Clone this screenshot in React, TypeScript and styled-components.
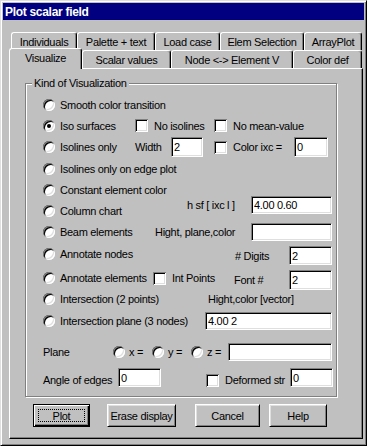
import React from 'react'
import styled, { createGlobalStyle } from 'styled-components'

const FONT = `"Liberation Sans", Arial, sans-serif`

const GlobalStyle = createGlobalStyle`
  html, body {
    margin: 0;
    padding: 0;
  }
  body {
    background: #c0c0c0;
  }
`

const Window = styled.div`
  width: 367px;
  height: 446px;
  box-sizing: border-box;
  padding: 2px;
  background: #c0c0c0;
  border: 1px solid;
  border-color: #dfdfdf #000 #000 #dfdfdf;
  box-shadow: inset 1px 1px 0 #fff, inset -1px -1px 0 #808080;
  display: flex;
  flex-direction: column;
  font-family: ${FONT};
  font-size: 11px;
  letter-spacing: -0.3px;
  color: #000;
`

const TitleBar = styled.div`
  flex: none;
  height: 17px;
  padding-left: 2px;
  background: #000080;
  color: #fff;
  font-weight: bold;
  font-size: 12px;
  display: flex;
  align-items: center;
`

const Body = styled.div`
  flex: 1;
  padding: 12px 1px 4px 6px;
  display: flex;
  flex-direction: column;
`

const TabRow = styled.div<{ $inset?: number }>`
  display: flex;
  align-items: flex-start;
  height: 18px;
  margin-left: ${p => p.$inset ?? 0}px;
`

const Tab = styled.div<{ $w: number; $active?: boolean }>`
  flex: none;
  width: ${p => p.$w}px;
  height: ${p => (p.$active ? 21 : 18)}px;
  margin-top: ${p => (p.$active ? -2 : 0)}px;
  padding-bottom: ${p => (p.$active ? 3 : 0)}px;
  box-sizing: border-box;
  border: 1px solid;
  border-bottom: none;
  border-color: #fff #000 #fff #fff;
  border-radius: 3px 3px 0 0;
  box-shadow: inset -1px 0 0 #808080;
  background: #c0c0c0;
  position: relative;
  z-index: ${p => (p.$active ? 1 : 0)};
  display: flex;
  align-items: center;
  justify-content: center;
  white-space: nowrap;
`

const Panel = styled.div`
  height: 371px;
  box-sizing: border-box;
  border: 1px solid;
  border-color: #fff #000 #000 #fff;
  box-shadow: inset -1px -1px 0 #808080;
  padding: 14px 0 0 15px;
  display: flex;
  flex-direction: column;
`

const GroupBox = styled.div`
  width: 312px;
  height: 314px;
  box-sizing: border-box;
  border: 1px solid #808080;
  box-shadow: 1px 1px 0 #fff, inset 1px 1px 0 #fff;
  display: flex;
  flex-direction: column;
`

const Caption = styled.span`
  align-self: flex-start;
  margin: -7px 0 0 6px;
  padding: 0 2px;
  line-height: 13px;
  background: #c0c0c0;
`

const Rows = styled.div`
  margin-top: 4px;
  padding-left: 17px;
  display: flex;
  flex-direction: column;
`

const Row = styled.div<{ $h: number }>`
  flex: none;
  height: ${p => p.$h}px;
  display: flex;
  align-items: center;
`

const Slot = styled.div<{ $w?: number; $gap?: number; $top?: number }>`
  flex: none;
  display: flex;
  align-items: center;
  white-space: nowrap;
  gap: ${p => p.$gap ?? 0}px;
  ${p => (p.$w !== undefined ? `width: ${p.$w}px;` : '')}
  ${p => (p.$top !== undefined ? `align-self: flex-start; margin-top: ${p.$top}px;` : '')}
`

const RadioDot = styled.span<{ $on?: boolean }>`
  flex: none;
  width: 12px;
  height: 12px;
  border-radius: 50%;
  background: #fff;
  box-shadow: inset 1px 1px 0 #808080, inset -1px -1px 0 #fff, inset 2px 2px 0 #000,
    inset -2px -2px 0 #dfdfdf;
  display: flex;
  align-items: center;
  justify-content: center;

  &::after {
    content: '';
    width: 4px;
    height: 4px;
    border-radius: 50%;
    background: ${p => (p.$on ? '#000' : 'transparent')};
  }
`

const CheckBox = styled.span`
  flex: none;
  width: 13px;
  height: 13px;
  background: #fff;
  box-shadow: inset 1px 1px 0 #808080, inset -1px -1px 0 #fff, inset 2px 2px 0 #000,
    inset -2px -2px 0 #dfdfdf;
`

const Field = styled.input<{ $w: number; $h: number }>`
  flex: none;
  width: ${p => p.$w}px;
  height: ${p => p.$h}px;
  box-sizing: border-box;
  margin: 0;
  padding: 0 2px;
  border: 1px solid;
  border-color: #808080 #fff #fff #808080;
  box-shadow: inset 1px 1px 0 #000, inset -1px -1px 0 #dfdfdf;
  background: #fff;
  font-family: ${FONT};
  font-size: 11px;
  letter-spacing: -0.3px;
  color: #000;
  outline: none;
`

const Spacer = styled.div<{ $w: number }>`
  flex: none;
  width: ${p => p.$w}px;
`

const ButtonRow = styled.div`
  display: flex;
  margin-top: 7px;
`

const Button = styled.button<{ $w: number; $ml: number; $default?: boolean }>`
  flex: none;
  width: ${p => p.$w}px;
  height: 23px;
  margin: 0 0 0 ${p => p.$ml}px;
  padding: 0;
  box-sizing: border-box;
  background: #c0c0c0;
  border: 1px solid;
  border-color: ${p => (p.$default ? '#000' : '#fff #000 #000 #fff')};
  box-shadow: ${p =>
    p.$default
      ? 'inset 1px 1px 0 #fff, inset -1px -1px 0 #000, inset -2px -2px 0 #808080'
      : 'inset 1px 1px 0 #dfdfdf, inset -1px -1px 0 #808080'};
  font-family: ${FONT};
  font-size: 11px;
  letter-spacing: -0.3px;
  color: #000;
  display: flex;
  align-items: center;
  justify-content: center;
`

const FocusRing = styled.span`
  width: calc(100% - 8px);
  height: calc(100% - 8px);
  box-sizing: border-box;
  border: 1px dotted #000;
  display: flex;
  align-items: center;
  justify-content: center;
`

function Option({ label, w, on }: { label: string; w?: number; on?: boolean }) {
  return (
    <Slot $w={w} $gap={5}>
      <RadioDot $on={on} />
      <span>{label}</span>
    </Slot>
  )
}

function Check({ label, w }: { label: string; w?: number }) {
  return (
    <Slot $w={w} $gap={6}>
      <CheckBox />
      <span>{label}</span>
    </Slot>
  )
}

const BACK_TABS = [
  { label: 'Individuals', w: 66 },
  { label: 'Palette + text', w: 78 },
  { label: 'Load case', w: 65 },
  { label: 'Elem Selection', w: 84 },
  { label: 'ArrayPlot', w: 58 },
]

const FRONT_TABS = [
  { label: 'Visualize', w: 73, active: true },
  { label: 'Scalar values', w: 89 },
  { label: 'Node <-> Element V', w: 122 },
  { label: 'Color def', w: 69 },
]

export default function App() {
  return (
    <>
      <GlobalStyle />
      <Window>
        <TitleBar>Plot scalar field</TitleBar>
        <Body>
          <TabRow $inset={2}>
            {BACK_TABS.map(t => (
              <Tab key={t.label} $w={t.w}>{t.label}</Tab>
            ))}
          </TabRow>
          <TabRow>
            {FRONT_TABS.map(t => (
              <Tab key={t.label} $w={t.w} $active={t.active}>{t.label}</Tab>
            ))}
          </TabRow>
          <Panel>
            <GroupBox>
              <Caption>Kind of Visualization</Caption>
              <Rows>
                <Row $h={21}>
                  <Option label="Smooth color transition" />
                </Row>
                <Row $h={21}>
                  <Option label="Iso surfaces" w={92} on />
                  <Check label="No isolines" w={79} />
                  <Check label="No mean-value" />
                </Row>
                <Row $h={22}>
                  <Option label="Isolines only" w={92} />
                  <Slot $w={36}>Width</Slot>
                  <Field $w={32} $h={20} defaultValue="2" readOnly />
                  <Spacer $w={11} />
                  <Check label="Color ixc =" w={80} />
                  <Field $w={34} $h={20} defaultValue="0" readOnly />
                </Row>
                <Row $h={21}>
                  <Option label="Isolines only on edge plot" />
                </Row>
                <Row $h={21}>
                  <Option label="Constant element color" />
                </Row>
                <Row $h={21}>
                  <Option label="Column chart" w={144} />
                  <Slot $top={-4}>
                    <Slot $w={64}>h sf [ ixc l ]</Slot>
                    <Field $w={81} $h={18} defaultValue="4.00 0.60" readOnly />
                  </Slot>
                </Row>
                <Row $h={21}>
                  <Option label="Beam elements" w={112} />
                  <Slot $w={96}>Hight, plane,color</Slot>
                  <Field $w={81} $h={18} defaultValue="" readOnly />
                </Row>
                <Row $h={23}>
                  <Option label="Annotate nodes" w={192} />
                  <Slot $top={4}>
                    <Slot $w={54}># Digits</Slot>
                    <Field $w={43} $h={19} defaultValue="2" readOnly />
                  </Slot>
                </Row>
                <Row $h={26}>
                  <Option label="Annotate elements" w={110} />
                  <Check label="Int Points" w={81} />
                  <Slot $top={5}>
                    <Slot $w={55}>Font #</Slot>
                    <Field $w={43} $h={20} defaultValue="2" readOnly />
                  </Slot>
                </Row>
                <Row $h={16}>
                  <Option label="Intersection (2 points)" w={165} />
                  <Slot>Hight,color [vector]</Slot>
                </Row>
                <Row $h={28}>
                  <Option label="Intersection plane (3 nodes)" w={162} />
                  <Field $w={127} $h={18} defaultValue="4.00 2" readOnly />
                </Row>
                <Row $h={34}>
                  <Slot $w={70}>Plane</Slot>
                  <Slot $w={39} $gap={4}><RadioDot /><span>x =</span></Slot>
                  <Slot $w={39} $gap={4}><RadioDot /><span>y =</span></Slot>
                  <Slot $w={37} $gap={4}><RadioDot /><span>z =</span></Slot>
                  <Field $w={104} $h={18} defaultValue="" readOnly />
                </Row>
                <Row $h={22}>
                  <Slot $w={75}>Angle of edges</Slot>
                  <Slot $top={-1}>
                    <Field $w={43} $h={19} defaultValue="0" readOnly />
                  </Slot>
                  <Spacer $w={45} />
                  <Check label="Deformed str" w={84} />
                  <Slot $top={-1}>
                    <Field $w={43} $h={19} defaultValue="0" readOnly />
                  </Slot>
                </Row>
              </Rows>
            </GroupBox>
            <ButtonRow>
              <Button $w={57} $ml={8} $default>
                <FocusRing>Plot</FocusRing>
              </Button>
              <Button $w={69} $ml={17}>Erase display</Button>
              <Button $w={65} $ml={19}>Cancel</Button>
              <Button $w={58} $ml={9}>Help</Button>
            </ButtonRow>
          </Panel>
        </Body>
      </Window>
    </>
  )
}
